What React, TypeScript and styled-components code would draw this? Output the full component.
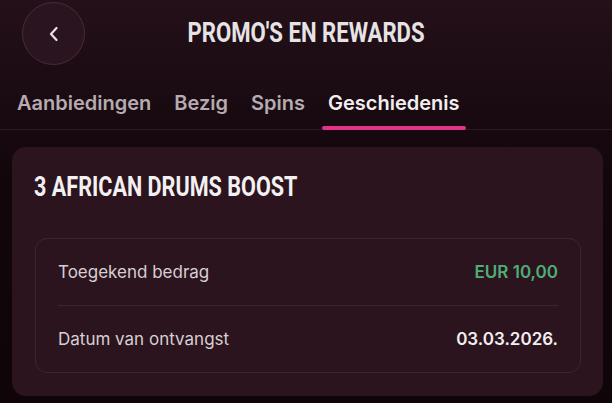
import React from "react";
import styled, { createGlobalStyle } from "styled-components";

const GlobalStyle = createGlobalStyle`
  html, body {
    margin: 0;
    padding: 0;
    background: #100509;
  }
  body {
    font-family: Inter, "Noto Sans", sans-serif;
    -webkit-font-smoothing: antialiased;
  }
`;

const Page = styled.div`
  width: 612px;
  height: 403px;
  overflow: hidden;
  background: linear-gradient(180deg, #241019 0%, #12060b 45%, #0f0408 100%);
  display: flex;
  flex-direction: column;
`;

const Header = styled.header`
  position: relative;
  height: 66px;
  display: flex;
  align-items: center;
  justify-content: center;
`;

const BackButton = styled.button`
  position: absolute;
  left: 22px;
  top: 2px;
  width: 63px;
  height: 63px;
  border-radius: 50%;
  border: 1px solid #4a2a3b;
  background: #2a141f;
  color: #e8e2e5;
  display: flex;
  align-items: center;
  justify-content: center;
  padding: 0;
  cursor: pointer;
`;

// condensed display face: no condensed family installed, so squeeze Roboto
const Title = styled.h1`
  margin: 0;
  font-family: Roboto, "Liberation Sans", sans-serif;
  font-weight: 700;
  font-size: 28px;
  line-height: 32px;
  color: #e6e3e5;
  transform: scaleX(0.79);
  transform-origin: center;
  white-space: nowrap;
`;

const Tabs = styled.nav`
  display: flex;
  padding: 0 11px;
  margin-top: 25px;
  border-bottom: 1px solid #2a1a22;
`;

const Tab = styled.div<{ active?: boolean }>`
  position: relative;
  padding: 0 6px 14px;
  margin-right: 11px;
  font-size: 20px;
  font-weight: 600;
  color: ${(p) => (p.active ? "#f2eef0" : "#b5abb0")};

  &::after {
    content: "";
    display: ${(p) => (p.active ? "block" : "none")};
    position: absolute;
    left: 0;
    right: 0;
    bottom: -1px;
    height: 4px;
    border-radius: 2px;
    background: #e1338a;
  }
`;

const Card = styled.section`
  margin: 17px 9px 0 12px;
  border-radius: 14px;
  background: #2b141d;
  padding: 25px 22px 23px 22px;
  display: flex;
  flex-direction: column;
`;

const CardTitle = styled.h2`
  margin: 0 0 36px;
  font-family: Roboto, "Liberation Sans", sans-serif;
  font-weight: 700;
  font-size: 27px;
  line-height: 30px;
  color: #f3f0f2;
  transform: scaleX(0.8);
  transform-origin: left;
  white-space: nowrap;
`;

const InfoBox = styled.div`
  margin-left: 1px;
  border: 1px solid #3b2530;
  border-radius: 12px;
  padding: 0 22px;
`;

const Row = styled.div`
  display: flex;
  justify-content: space-between;
  align-items: center;
  height: 66px;

  & + & {
    border-top: 1px solid #3b2530;
  }
`;

const Label = styled.span`
  font-size: 17px;
  font-weight: 400;
  color: #d6cfd3;
`;

const Value = styled.span<{ tone?: "green" | "white" }>`
  font-size: 17px;
  font-weight: 600;
  color: ${(p) => (p.tone === "green" ? "#4dae78" : "#f1eef0")};
`;

const tabs = ["Aanbiedingen", "Bezig", "Spins", "Geschiedenis"];

export default function App() {
  return (
    <>
      <GlobalStyle />
      <Page>
        <Header>
          <BackButton aria-label="Terug">
            <svg width="20" height="20" viewBox="0 0 20 20" fill="none">
              <path
                d="M12.5 4L7 10l5.5 6"
                stroke="currentColor"
                strokeWidth="2.2"
                strokeLinecap="round"
                strokeLinejoin="round"
              />
            </svg>
          </BackButton>
          <Title>PROMO'S EN REWARDS</Title>
        </Header>
        <Tabs>
          {tabs.map((t) => (
            <Tab key={t} active={t === "Geschiedenis"}>
              {t}
            </Tab>
          ))}
        </Tabs>
        <Card>
          <CardTitle>3 AFRICAN DRUMS BOOST</CardTitle>
          <InfoBox>
            <Row>
              <Label>Toegekend bedrag</Label>
              <Value tone="green">EUR 10,00</Value>
            </Row>
            <Row>
              <Label>Datum van ontvangst</Label>
              <Value>03.03.2026.</Value>
            </Row>
          </InfoBox>
        </Card>
      </Page>
    </>
  );
}
